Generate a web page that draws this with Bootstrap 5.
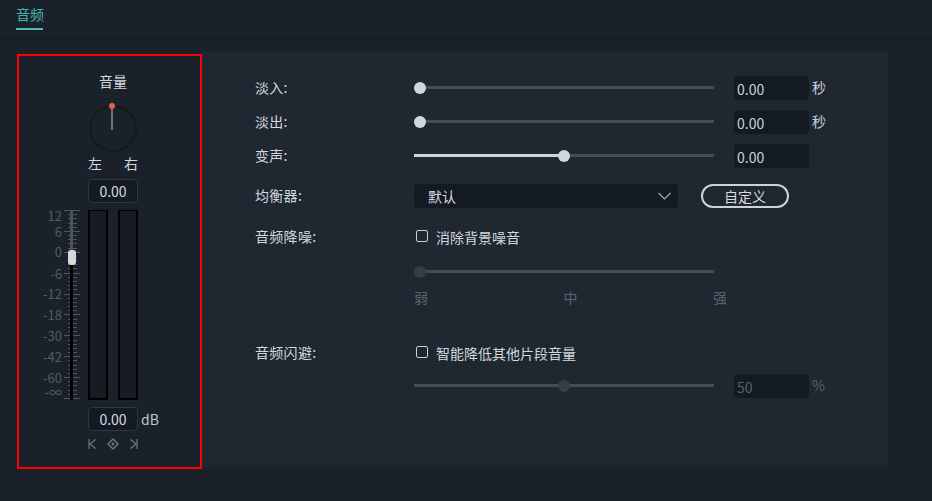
<!DOCTYPE html>
<html lang="zh-CN">
<head>
  <meta charset="UTF-8">
  <title>音频</title>
  <link href="https://cdn.jsdelivr.net/npm/bootstrap@5.3.3/dist/css/bootstrap.min.css" rel="stylesheet">
  <style>
    body { background: #1a212a; color: #d3d8de; font: 14px/20px "Noto Sans CJK SC", "Noto Sans", sans-serif; width: 932px; height: 501px; overflow: hidden; }
    .tab-head { height: 39px; border-bottom: 1px solid #151b21; padding-left: 16px; }
    .tab-on { display: block; width: 27px; height: 30px; padding-top: 4px; color: #45b5a6; border-bottom: 2px solid #4dbdb0; white-space: nowrap; }
    .work { padding: 13px 44px 0 17px; }
    .mixer { width: 185px; height: 415px; margin-top: 2px; border: 2px solid #f00; padding: 15px 0 0 7px; flex: none; z-index: 1; background: #1a212a; }
    .knob { width: 48px; height: 47px; border: 2px solid #14191f; border-radius: 50%; margin-top: 14px; position: relative; }
    .knob-arm { position: absolute; left: 20px; top: -1px; width: 2px; height: 24px; background: #6d7278; }
    .knob-dot { position: absolute; left: 18px; top: -4px; width: 6px; height: 6px; border-radius: 50%; background: #f2574f; }
    .pan { width: 50px; margin-top: 1px; }
    .num-box { width: 50px; height: 24px; background: #141a21; border: 1px solid #2f3741; border-radius: 4px; text-align: center; line-height: 23px; color: #d4dbe2; flex: none; }
    .num-top { margin-top: 6px; }
    .meter-row { height: 190px; margin-top: 7px; width: 174px; }
    .scale { width: 62px; position: relative; flex: none; }
    .scale svg { display: block; overflow: visible; }
    .scale text { font: 13px "Noto Sans CJK SC", sans-serif; fill: #535b65; text-anchor: end; }
    .fader-cap { position: absolute; left: 42px; top: 40px; width: 8px; height: 15px; border-radius: 3px; background: #d5d7d9; }
    .bar-lvl { width: 20px; height: 190px; background: #171c23; border: 2px solid #000; border-top-width: 1px; }
    .bar-gap { margin-left: 10px; }
    .db-row { width: 174px; margin-top: 7px; padding-left: 62px; }
    .db-unit { margin-left: 3px; color: #b9c6d2; }
    .key-row { width: 50px; margin-top: 7px; }
    .panel { width: 688px; height: 415px; background: #1f2731; margin-left: -1px; padding-left: 54px; }
    .line-row { height: 24px; }
    .lbl { width: 159px; flex: none; white-space: nowrap; margin-bottom: 2px; letter-spacing: .3px; }
    .trk { position: relative; width: 300px; height: 3px; background: #454c55; flex: none; margin-bottom: 2px; }
    .trk-fill { position: absolute; left: 0; top: 0; height: 3px; width: 150px; background: #d4d4d4; }
    .thumb { position: absolute; top: -4px; width: 12px; height: 12px; border-radius: 50%; background: #d0d6de; }
    .thumb-off { background: #353d47; }
    .val { width: 75px; height: 24px; margin-left: 20px; background: #141a21; border-radius: 4px; padding-left: 3px; line-height: 26px; color: #c6d2dd; flex: none; }
    .unit { margin: 0 0 2px 3px; color: #c9d0e0; }
    .dim { color: #5b636c; }
    .val.dim { color: #59626c; }
    .pick { width: 264px; height: 24px; background: #141a21; border-radius: 4px; padding: 0 7px 0 14px; flex: none; line-height: 26px; color: #d7dbe0; }
    .pill-btn { width: 88px; height: 24px; margin-left: 23px; border: 2px solid #cfd2d4; border-radius: 12px; background: transparent; color: #d7dbe0; padding: 0; font-size: 14px; line-height: 20px; }
    .tick-box { width: 12px; height: 12px; border: 1px solid #c9ced4; border-radius: 2px; flex: none; margin: 0 8px 2px 2px; }
    .tiers { width: 313px; }
    .gap-r2 { margin-top: 10px; }
    .gap-eq { margin-top: 16px; }
    .gap-nr { margin-top: 17px; }
    .gap-nr-sl { margin-top: 11px; }
    .gap-nr-tx { margin-top: 1px; }
    .gap-dk { margin-top: 32px; }
    .gap-dk-sl { margin-top: 9px; }
  </style>
</head>
<body>
  <div class="tab-head"><span class="tab-on">音频</span></div>
  <div class="work d-flex">
    <div class="mixer d-flex flex-column align-items-center">
      <div>音量</div>
      <div class="knob"><div class="knob-arm"></div><div class="knob-dot"></div></div>
      <div class="pan d-flex justify-content-between"><span>左</span><span>右</span></div>
      <div class="num-box num-top">0.00</div>
      <div class="meter-row d-flex">
        <div class="scale">
          <svg width="62" height="190" id="scaleSvg"></svg>
          <div class="fader-cap"></div>
        </div>
        <div class="bar-lvl"></div>
        <div class="bar-lvl bar-gap"></div>
      </div>
      <div class="db-row d-flex align-items-center"><div class="num-box">0.00</div><span class="db-unit">dB</span></div>
      <div class="key-row d-flex justify-content-between align-items-center">
        <svg width="8" height="10" viewBox="0 0 8 10" fill="none" stroke="#6f7780" stroke-width="1.2"><path d="M1 0v10M7.5 .5 2 5l5.5 4.5"/></svg>
        <svg width="12" height="12" viewBox="0 0 12 12" fill="none" stroke="#6f7780" stroke-width="1.4"><path d="M6 1 11 6 6 11 1 6Z"/><circle cx="6" cy="6" r="1.4" fill="#6f7780" stroke="none"/></svg>
        <svg width="8" height="10" viewBox="0 0 8 10" fill="none" stroke="#6f7780" stroke-width="1.2"><path d="M7 0v10M.5 .5 6 5 .5 9.5"/></svg>
      </div>
    </div>
    <div class="panel">
      <div class="line-row d-flex align-items-center mt-4">
        <div class="lbl">淡入:</div>
        <div class="trk"><div class="thumb" style="left:0"></div></div>
        <div class="val">0.00</div><span class="unit">秒</span>
      </div>
      <div class="line-row d-flex align-items-center gap-r2">
        <div class="lbl">淡出:</div>
        <div class="trk"><div class="thumb" style="left:0"></div></div>
        <div class="val">0.00</div><span class="unit">秒</span>
      </div>
      <div class="line-row d-flex align-items-center gap-r2">
        <div class="lbl">变声:</div>
        <div class="trk"><div class="trk-fill"></div><div class="thumb" style="left:144px"></div></div>
        <div class="val">0.00</div>
      </div>
      <div class="line-row d-flex align-items-center gap-eq">
        <div class="lbl">均衡器:</div>
        <div class="pick d-flex justify-content-between align-items-center">
          <span>默认</span>
          <svg width="13" height="8" viewBox="0 0 13 8" fill="none" stroke="#a6abb1" stroke-width="1.1"><path d="M.5 1 6.5 7 12.5 1"/></svg>
        </div>
        <button type="button" class="btn pill-btn">自定义</button>
      </div>
      <div class="line-row d-flex align-items-center gap-nr">
        <div class="lbl">音频降噪:</div>
        <span class="tick-box"></span><span>消除背景噪音</span>
      </div>
      <div class="line-row d-flex align-items-center gap-nr-sl">
        <div class="lbl"></div>
        <div class="trk"><div class="thumb thumb-off" style="left:0"></div></div>
      </div>
      <div class="line-row d-flex align-items-center gap-nr-tx">
        <div class="lbl"></div>
        <div class="tiers d-flex justify-content-between dim"><span>弱</span><span>中</span><span>强</span></div>
      </div>
      <div class="line-row d-flex align-items-center gap-dk">
        <div class="lbl">音频闪避:</div>
        <span class="tick-box"></span><span>智能降低其他片段音量</span>
      </div>
      <div class="line-row d-flex align-items-center gap-dk-sl">
        <div class="lbl"></div>
        <div class="trk"><div class="thumb thumb-off" style="left:144px"></div></div>
        <div class="val dim">50</div><span class="unit dim">%</span>
      </div>
    </div>
  </div>
  <script>
    // fader scale: ticks every ~4.2px, long ones every fifth, labels beside them
    const svg = document.getElementById("scaleSvg");
    let out = '<rect x="44" y="0" width="3" height="41" fill="#4b525b"/><rect x="44" y="50" width="3" height="140" fill="#000"/>';
    const labels = [["12", 6], ["6", 22], ["0", 42], ["-6", 64], ["-12", 84], ["-18", 105], ["-30", 126], ["-42", 147], ["-60", 168], ["-∞", 182]];
    for (let i = 0; i <= 45; i++) {
      const y = Math.round(i * 188 / 45) + 0.5;
      const big = i % 5 === 0;
      out += `<path d="M${big ? 38 : 42} ${y}H44M47 ${y}H${big ? 54 : 51}" stroke="#4e555e"/>`;
    }
    labels.forEach(l => { out += `<text x="36" y="${l[1] + 5}">${l[0]}</text>`; });
    svg.innerHTML = out;
  </script>
</body>
</html>
